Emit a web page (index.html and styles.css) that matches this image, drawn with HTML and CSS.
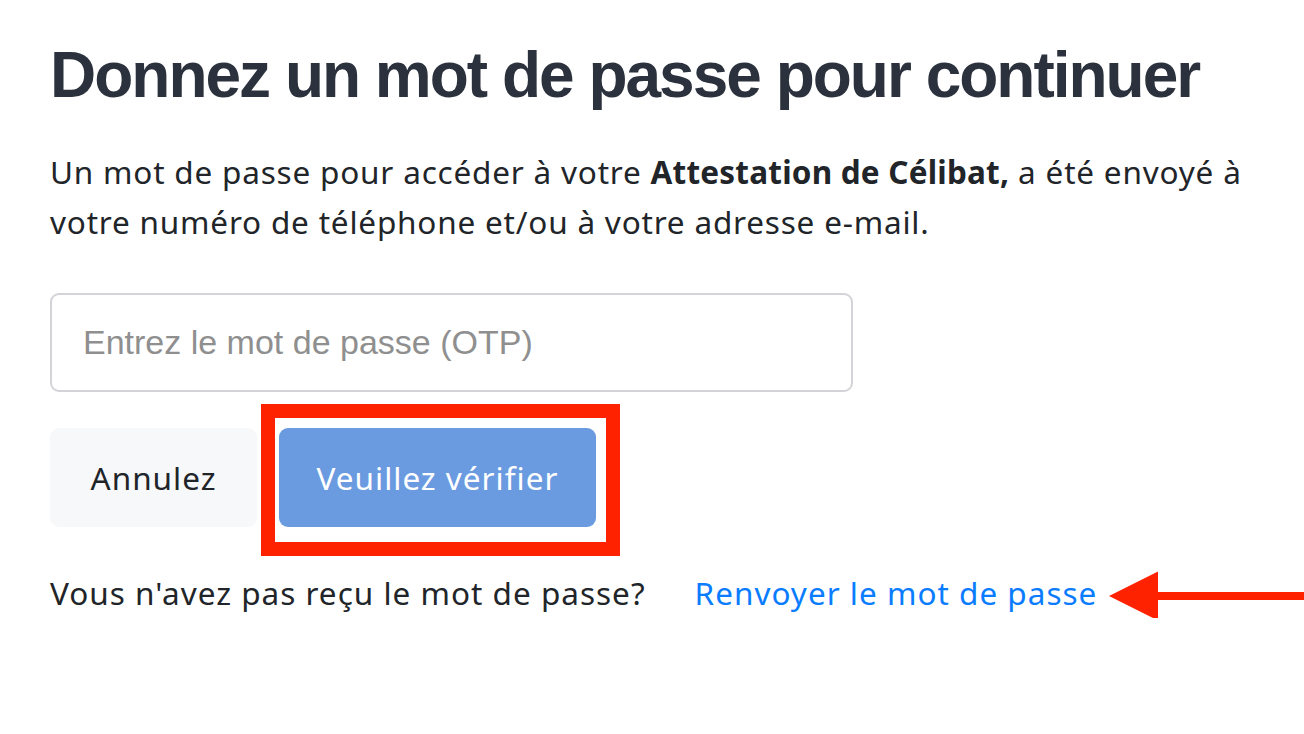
FILE: index.html
```html
<!DOCTYPE html>
<html lang="fr">
<head>
<meta charset="utf-8">
<link rel="stylesheet" href="styles.css">
</head>
<body>
<main class="page">
  <h1 class="title">Donnez un mot de passe pour continuer</h1>
  <p class="lead">Un mot de passe pour accéder à votre <strong>Attestation de Célibat,</strong> a été envoyé à votre numéro de téléphone et/ou à votre adresse e-mail.</p>
  <input class="otp" type="text" placeholder="Entrez le mot de passe (OTP)">
  <div class="actions">
    <button class="btn btn-cancel" type="button">Annulez</button>
    <div class="highlight">
      <button class="btn btn-verify" type="button">Veuillez vérifier</button>
    </div>
  </div>
  <div class="resend">
    <span class="resend-q">Vous n'avez pas reçu le mot de passe?</span>
    <a class="resend-link" href="#">Renvoyer le mot de passe</a>
    <svg class="arrow" width="200" height="52" viewBox="0 0 200 52">
      <rect x="45" y="22" width="155" height="8" fill="#ff2200"/>
      <polygon points="0,26 49,1.5 49,50.5" fill="#ff2200"/>
    </svg>
  </div>
</main>
</body>
</html>
```
FILE: styles.css
```css
* { box-sizing: border-box; }
html, body { margin: 0; padding: 0; background: #fff; }
body { font-family: "Noto Sans", "Open Sans", sans-serif; color: #212529; }
.page { padding: 35px 0 0 50px; }
.title {
  font-family: "Liberation Sans", Arial, sans-serif;
  font-weight: 700;
  font-size: 64px;
  letter-spacing: -2px;
  line-height: 80px;
  color: #2c323d;
  margin: 0 0 32px;
}
.lead {
  font-size: 31.5px;
  letter-spacing: 0.8px;
  line-height: 50px;
  margin: 0 0 46px;
  width: 1225px;
}
.lead strong { font-weight: 700; letter-spacing: 0.2px; }
.otp {
  display: block;
  width: 803px;
  height: 99px;
  border: 2px solid #d2d4d7;
  border-radius: 9px;
  padding: 0 31px;
  font-family: "Liberation Sans", Arial, sans-serif;
  font-size: 34px;
  outline: none;
}
.otp::placeholder { color: #8f8f8f; }
.actions {
  display: flex;
  align-items: flex-start;
  margin-top: 12px;
  gap: 4px;
}
.btn {
  border: none;
  height: 99px;
  border-radius: 9px;
  font-family: "Noto Sans", sans-serif;
  font-size: 31.5px;
  letter-spacing: 1px;
  cursor: pointer;
  padding: 0;
}
.btn-cancel {
  width: 207px;
  margin-top: 24px;
  background: #f7f8fa;
  color: #212529;
}
.highlight {
  border: 14px solid #ff2200;
  padding: 10px 10px 15px 4px;
  width: 359px;
  height: 152px;
}
.btn-verify {
  width: 317px;
  background: #6a9ae0;
  color: #fff;
}
.resend {
  display: flex;
  align-items: center;
  margin-top: 12px;
  height: 50px;
  line-height: 50px;
  font-size: 31.5px;
  letter-spacing: 1px;
  white-space: nowrap;
}
.resend-link {
  color: #0a7cff;
  text-decoration: none;
  margin-left: 49px;
}
.arrow { margin: 6px 0 0 12px; flex: none; }
```
